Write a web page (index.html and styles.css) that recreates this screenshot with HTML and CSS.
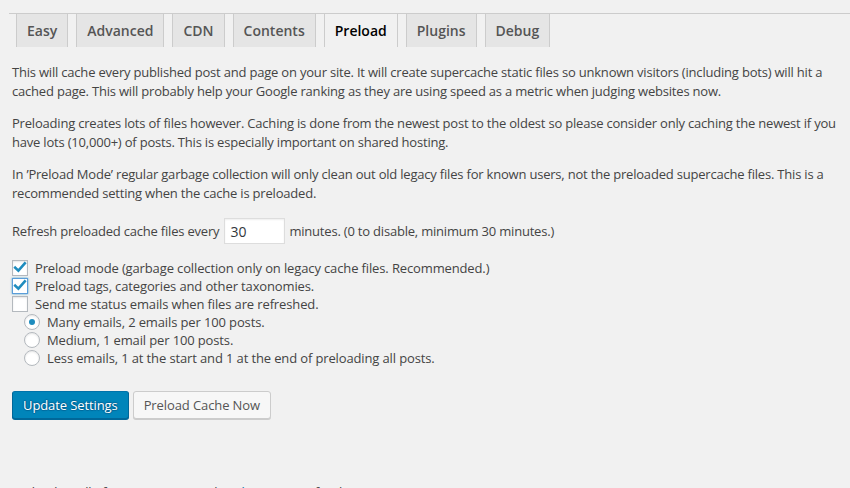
FILE: index.html
```html
<!DOCTYPE html>
<html lang="en">
<head>
<meta charset="utf-8">
<title>WP Super Cache – Preload</title>
<link rel="stylesheet" href="styles.css">
</head>
<body>
<div class="wrap">
  <nav class="tabs">
    <a class="tab" href="#">Easy</a>
    <a class="tab" href="#">Advanced</a>
    <a class="tab" href="#">CDN</a>
    <a class="tab" href="#">Contents</a>
    <a class="tab tab-active" href="#">Preload</a>
    <a class="tab" href="#">Plugins</a>
    <a class="tab" href="#">Debug</a>
  </nav>

  <p>This will cache every published post and page on your site. It will create supercache static files so unknown visitors (including bots) will hit a cached page. This will probably help your Google ranking as they are using speed as a metric when judging websites now.</p>
  <p>Preloading creates lots of files however. Caching is done from the newest post to the oldest so please consider only caching the newest if you have lots (10,000+) of posts. This is especially important on shared hosting.</p>
  <p>In ’Preload Mode’ regular garbage collection will only clean out old legacy files for known users, not the preloaded supercache files. This is a recommended setting when the cache is preloaded.</p>

  <form class="preload-form">
    <div class="refresh-row">
      <span>Refresh preloaded cache files every</span>
      <input class="num-input" type="text" value="30">
      <span>minutes. (0 to disable, minimum 30 minutes.)</span>
    </div>

    <div class="options">
      <label class="opt">
        <span class="box"><svg viewBox="0 0 16 16" width="16" height="16"><path d="M3.2 7.6 L6.4 10.6 L12.8 3.4" fill="none" stroke="#1e8cbe" stroke-width="2.6" stroke-linecap="square"/></svg></span>
        <span>Preload mode (garbage collection only on legacy cache files. Recommended.)</span>
      </label>
      <label class="opt">
        <span class="box box-focus"><svg viewBox="0 0 16 16" width="16" height="16"><path d="M3.2 7.6 L6.4 10.6 L12.8 3.4" fill="none" stroke="#1e8cbe" stroke-width="2.6" stroke-linecap="square"/></svg></span>
        <span>Preload tags, categories and other taxonomies.</span>
      </label>
      <label class="opt">
        <span class="box"></span>
        <span>Send me status emails when files are refreshed.</span>
      </label>
      <label class="opt opt-radio">
        <span class="radio radio-on"></span>
        <span>Many emails, 2 emails per 100 posts.</span>
      </label>
      <label class="opt opt-radio">
        <span class="radio"></span>
        <span>Medium, 1 email per 100 posts.</span>
      </label>
      <label class="opt opt-radio">
        <span class="radio"></span>
        <span>Less emails, 1 at the start and 1 at the end of preloading all posts.</span>
      </label>
    </div>

    <div class="actions">
      <button class="btn btn-primary" type="button">Update Settings</button>
      <button class="btn" type="button">Preload Cache Now</button>
    </div>
  </form>

  <p class="note">Preloading all of your posts may take a <a href="#">long time</a> to finish.</p>
</div>
</body>
</html>
```

FILE: styles.css
```css
html, body {
  margin: 0;
  padding: 0;
  background: #f1f1f1;
}

body {
  font-family: "Open Sans", "Liberation Sans", sans-serif;
  font-size: 13px;
  line-height: 19px;
  letter-spacing: -0.2px;
  color: #444;
  overflow: hidden;
}

.wrap {
  padding: 13px 0 0 12px;
}

/* tab strip hanging under a rule */
.tabs {
  display: flex;
  gap: 8px;
  margin-left: -3px;
  padding-left: 7px;
  border-top: 1px solid #ccc;
  margin-bottom: 16px;
  letter-spacing: 0;
}

.tab {
  display: block;
  padding: 5px 10px 4px;
  font-size: 14px;
  line-height: 24px;
  font-weight: 600;
  color: #555;
  text-decoration: none;
  background: #e5e5e5;
  border-left: 1px solid #ccc;
  border-right: 1px solid #ccc;
}

.tab-active {
  background: #f1f1f1;
  color: #000;
}

p {
  margin: 13px 0;
}

.tabs + p {
  margin-top: 0;
}

.refresh-row {
  display: flex;
  align-items: center;
  margin-top: 15px;
  height: 26px;
}

.num-input {
  box-sizing: border-box;
  width: 61px;
  height: 26px;
  margin: 0 4px 0 5px;
  padding: 3px 5px;
  border: 1px solid #ddd;
  box-shadow: inset 0 1px 2px rgba(0, 0, 0, 0.07);
  background: #fff;
  font: inherit;
  font-size: 14px;
  color: #32373c;
  outline: none;
}

.options {
  margin-top: 15px;
  letter-spacing: -0.13px;
}

.opt {
  display: flex;
  align-items: center;
  height: 18px;
  gap: 7px;
}

.opt-radio {
  padding-left: 12px;
}

.box,
.radio {
  box-sizing: border-box;
  flex: none;
  width: 16px;
  height: 16px;
  border: 1px solid #b4b9be;
  background: #fff;
  box-shadow: inset 0 1px 2px rgba(0, 0, 0, 0.1);
  position: relative;
}

.box svg {
  position: absolute;
  left: -1px;
  top: -1px;
}

.box-focus {
  border-color: #5b9dd9;
  box-shadow: 0 0 2px rgba(30, 140, 190, 0.8);
}

.radio {
  border-radius: 50%;
}

.radio-on::before {
  content: "";
  position: absolute;
  left: 4px;
  top: 4px;
  width: 6px;
  height: 6px;
  border-radius: 50%;
  background: #1e8cbe;
}

.actions {
  display: flex;
  gap: 4px;
  margin-top: 24px;
}

.btn {
  box-sizing: border-box;
  height: 28px;
  padding: 0 10px 1px;
  font: inherit;
  font-size: 13px;
  line-height: 26px;
  letter-spacing: -0.1px;
  color: #555;
  background: #f7f7f7;
  border: 1px solid #ccc;
  border-radius: 3px;
  box-shadow: 0 1px 0 #ccc;
  cursor: pointer;
}

.btn-primary {
  color: #fff;
  background: #0085ba;
  border-color: #0073aa #006799 #006799;
  box-shadow: 0 1px 0 #006799;
  text-shadow: 0 -1px 1px #006799, 1px 0 1px #006799, 0 1px 1px #006799, -1px 0 1px #006799;
}

.note {
  margin-top: 64px;
  color: #444;
}

.note a {
  color: #0073aa;
}
```
